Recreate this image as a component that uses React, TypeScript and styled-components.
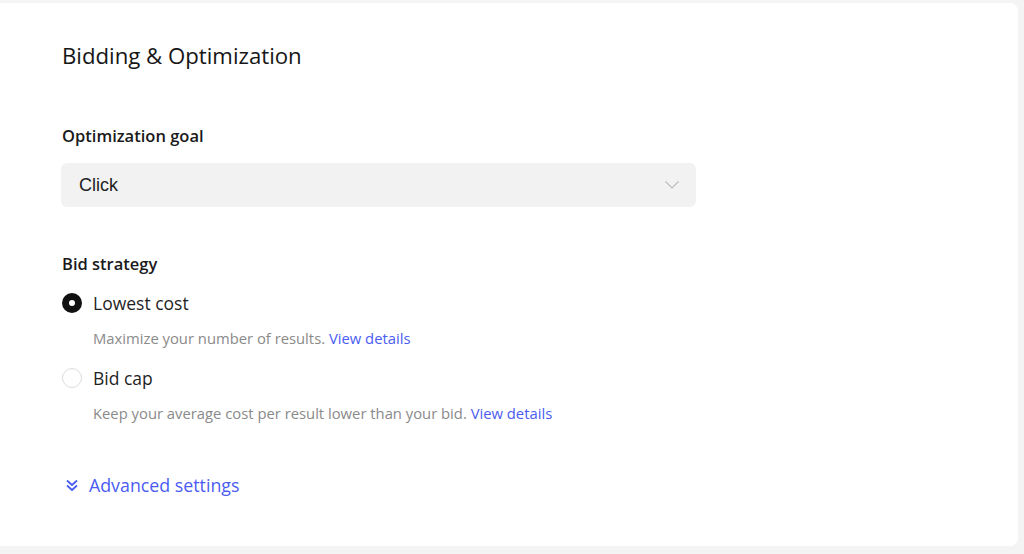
import React, { useState } from "react";
import styled, { createGlobalStyle } from "styled-components";

const GlobalStyle = createGlobalStyle`
  html, body {
    margin: 0;
    padding: 0;
    background: #f4f4f4;
    font-family: "Open Sans", "Liberation Sans", sans-serif;
    color: #1a1a1a;
    overflow: hidden;
  }
`;

const Page = styled.div`
  height: 554px;
  padding: 3px 6px 0 0;
  box-sizing: border-box;
`;

const Card = styled.section`
  margin-left: -12px;
  height: 543px;
  box-sizing: border-box;
  background: #fff;
  border-radius: 8px;
  padding: 40px 0 0 74px;
`;

const Title = styled.h2`
  margin: 0;
  font-size: 22.2px;
  font-weight: 500;
  line-height: 26px;
  color: #161616;
`;

const Field = styled.div<{ gap: number }>`
  margin-top: ${({ gap }) => gap}px;
`;

const Label = styled.div`
  font-size: 16.5px;
  font-weight: 600;
  line-height: 20px;
  color: #1a1a1a;
`;

const Select = styled.button`
  margin-top: 17px;
  width: 635px;
  height: 44px;
  margin-left: -1px;
  display: flex;
  align-items: center;
  justify-content: space-between;
  padding: 0 16px 0 18px;
  background: #f2f2f2;
  border: none;
  border-radius: 6px;
  font-family: "Liberation Sans", Arial, sans-serif;
  font-size: 18px;
  color: #222;
  cursor: pointer;
`;

const RadioRow = styled.label`
  display: flex;
  align-items: center;
  gap: 11px;
  cursor: pointer;
  font-size: 17.5px;
  color: #1f1f1f;
  height: 22px;
`;

const Dot = styled.span<{ checked: boolean }>`
  width: 20px;
  height: 20px;
  box-sizing: border-box;
  border-radius: 50%;
  border: ${({ checked }) => (checked ? "7px solid #111" : "1px solid #dcdcdc")};
  background: #fff;
`;

const Hint = styled.div`
  margin: 15px 0 0 31px;
  font-size: 14.8px;
  line-height: 18px;
  color: #8a8a8a;
`;

const Link = styled.a`
  color: #4a5cf2;
  text-decoration: none;
  cursor: pointer;
`;

const Options = styled.div`
  margin-top: 18px;
  display: flex;
  flex-direction: column;
`;

const Option = styled.div<{ gap: number }>`
  margin-top: ${({ gap }) => gap}px;
`;

const Advanced = styled.a`
  margin-top: 51px;
  display: flex;
  align-items: center;
  gap: 10px;
  color: #4a5cf2;
  font-size: 17.8px;
  cursor: pointer;
`;

const Chevron = () => (
  <svg width="16" height="10" viewBox="0 0 16 10" fill="none">
    <path d="M1.5 1.5 L8 8 L14.5 1.5" stroke="#bdbdbd" strokeWidth="1.2" />
  </svg>
);

const DoubleChevron = () => (
  <svg width="14" height="14" viewBox="0 0 14 14" fill="none" style={{ marginLeft: 3 }}>
    <path d="M2 2.5 L7 7 L12 2.5 M2 7.5 L7 12 L12 7.5" stroke="#4a5cf2" strokeWidth="1.8" strokeLinejoin="round" />
  </svg>
);

const strategies = [
  { id: "lowest", label: "Lowest cost", hint: "Maximize your number of results." },
  { id: "cap", label: "Bid cap", hint: "Keep your average cost per result lower than your bid." },
];

export default function App() {
  const [strategy, setStrategy] = useState("lowest");

  return (
    <Page>
      <GlobalStyle />
      <Card>
        <Title>Bidding &amp; Optimization</Title>
        <Field gap={57}>
          <Label>Optimization goal</Label>
          <Select>
            <span>Click</span>
            <Chevron />
          </Select>
        </Field>
        <Field gap={47}>
          <Label>Bid strategy</Label>
          <Options>
            {strategies.map((s, i) => (
              <Option key={s.id} gap={i === 0 ? 0 : 20}>
                <RadioRow onClick={() => setStrategy(s.id)}>
                  <Dot checked={strategy === s.id} />
                  {s.label}
                </RadioRow>
                <Hint>
                  {s.hint} <Link>View details</Link>
                </Hint>
              </Option>
            ))}
          </Options>
        </Field>
        <Advanced>
          <DoubleChevron />
          Advanced settings
        </Advanced>
      </Card>
    </Page>
  );
}
